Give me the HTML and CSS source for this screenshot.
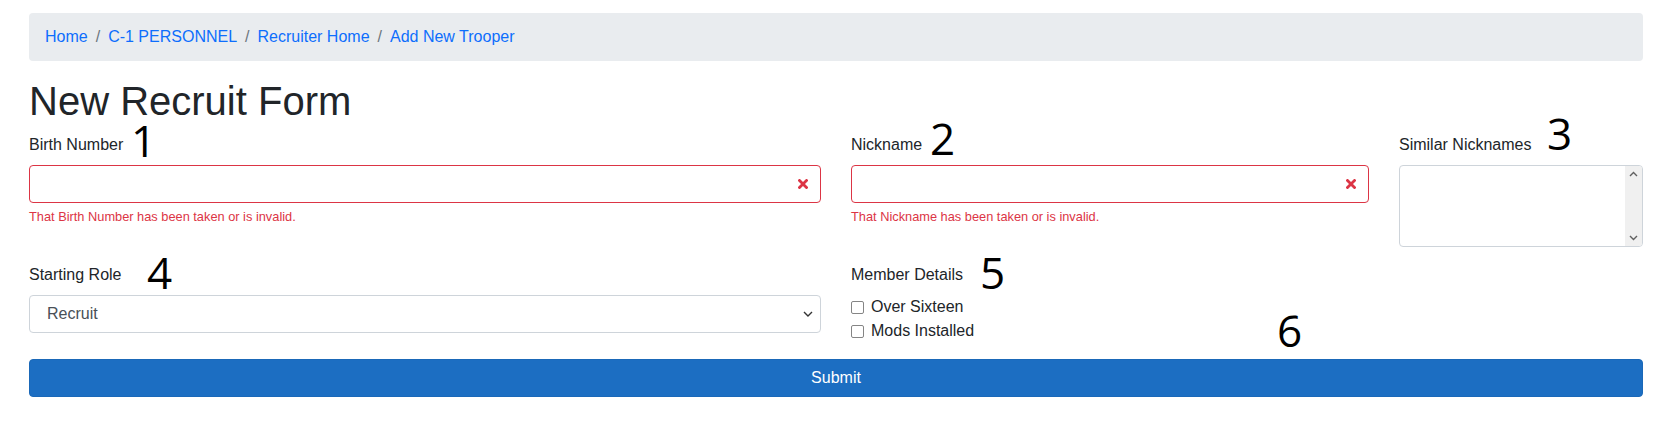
FILE: index.html
```html
<!DOCTYPE html>
<html lang="en">
<head>
<meta charset="utf-8">
<title>New Recruit Form</title>
<link rel="stylesheet" href="styles.css">
</head>
<body>
<div class="page">
  <nav class="breadcrumb">
    <a href="#">Home</a><span class="sep">/</span>
    <a href="#">C-1 PERSONNEL</a><span class="sep">/</span>
    <a href="#">Recruiter Home</a><span class="sep">/</span>
    <a href="#">Add New Trooper</a>
  </nav>
  <h1 class="title">New Recruit Form</h1>
  <form class="form">
    <div class="row">
      <div class="col col-6">
        <label class="label">Birth Number</label>
        <div class="field">
          <input class="control invalid" type="text">
          <svg class="x-icon" viewBox="0 0 10 10" width="10" height="10"><path d="M1.5 1.5 L8.5 8.5 M8.5 1.5 L1.5 8.5" stroke="#dc3545" stroke-width="2.8" stroke-linecap="square"/></svg>
        </div>
        <div class="feedback">That Birth Number has been taken or is invalid.</div>
      </div>
      <div class="col col-4">
        <label class="label">Nickname</label>
        <div class="field">
          <input class="control invalid" type="text">
          <svg class="x-icon" viewBox="0 0 10 10" width="10" height="10"><path d="M1.5 1.5 L8.5 8.5 M8.5 1.5 L1.5 8.5" stroke="#dc3545" stroke-width="2.8" stroke-linecap="square"/></svg>
        </div>
        <div class="feedback">That Nickname has been taken or is invalid.</div>
      </div>
      <div class="col col-2">
        <label class="label">Similar Nicknames</label>
        <div class="listbox">
          <div class="list-area"></div>
          <div class="scrollbar">
            <svg viewBox="0 0 17 17" width="17" height="17"><path d="M5 10 L8.5 6.5 L12 10" fill="none" stroke="#606060" stroke-width="1.4"/></svg>
            <svg viewBox="0 0 17 17" width="17" height="17"><path d="M5 7 L8.5 10.5 L12 7" fill="none" stroke="#606060" stroke-width="1.4"/></svg>
          </div>
        </div>
      </div>
    </div>
    <div class="row">
      <div class="col col-6">
        <label class="label">Starting Role</label>
        <div class="field">
          <select class="control select">
            <option>Recruit</option>
          </select>
          <svg class="chev" viewBox="0 0 10 6" width="10" height="6"><path d="M1 1 L5 5 L9 1" fill="none" stroke="#333" stroke-width="1.4"/></svg>
        </div>
      </div>
      <div class="col col-6">
        <label class="label">Member Details</label>
        <label class="check"><input type="checkbox"><span>Over Sixteen</span></label>
        <label class="check"><input type="checkbox"><span>Mods Installed</span></label>
      </div>
    </div>
    <button class="submit" type="button">Submit</button>
  </form>

  <span class="annot a1">1</span>
  <span class="annot a2">2</span>
  <span class="annot a3">3</span>
  <span class="annot a4">4</span>
  <span class="annot a5">5</span>
  <span class="annot a6">6</span>
</div>
</body>
</html>
```
FILE: styles.css
```css
* { box-sizing: border-box; }
html, body { margin: 0; padding: 0; background: #fff; }
body {
  font-family: "Liberation Sans", Arial, sans-serif;
  font-size: 16px;
  line-height: 1.5;
  color: #212529;
}
.page {
  position: relative;
  padding: 13px 11px 0 29px;
}
.breadcrumb {
  display: flex;
  align-items: center;
  height: 48px;
  padding: 0 16px;
  background: #e9ecef;
  border-radius: 4px;
  margin-bottom: 16px;
}
.breadcrumb a { color: #0d6efd; text-decoration: none; }
.breadcrumb .sep { color: #6c757d; padding: 0 8px; }
.title {
  font-size: 40px;
  font-weight: 400;
  line-height: 1.2;
  margin: 0 0 8px;
}
.form { margin: 0; }
.row {
  display: flex;
  margin: 0 -15px;
}
.col { padding: 0 15px; margin-bottom: 16px; }
.col-6 { flex: 0 0 50%; }
.col-4 { flex: 0 0 33.3333%; }
.col-2 { flex: 0 0 16.6667%; }
.label {
  display: block;
  margin-bottom: 8px;
}
.field { position: relative; }
.control {
  display: block;
  width: 100%;
  height: 38px;
  padding: 6px 12px;
  font: inherit;
  color: #495057;
  background: #fff;
  border: 1px solid #ced4da;
  border-radius: 4px;
  outline: none;
}
.control.invalid { border-color: #dc3545; }
.x-icon {
  position: absolute;
  right: 13px;
  top: 14px;
}
.feedback {
  margin-top: 4px;
  font-size: 12.8px;
  line-height: 1.5;
  color: #dc3545;
}
.listbox {
  display: flex;
  height: 82px;
  border: 1px solid #ced4da;
  border-radius: 4px;
  overflow: hidden;
}
.list-area { flex: 1; }
.scrollbar {
  width: 17px;
  background: #f0f0f0;
  display: flex;
  flex-direction: column;
  justify-content: space-between;
}
.scrollbar svg { display: block; }
.select {
  appearance: none;
  -webkit-appearance: none;
  padding-left: 17px;
}
.chev {
  position: absolute;
  right: 8px;
  top: 16px;
}
.check {
  display: flex;
  align-items: center;
  height: 24px;
}
.check input {
  appearance: none;
  -webkit-appearance: none;
  width: 13px;
  height: 13px;
  margin: 0 7px 0 0;
  border: 1.5px solid #858585;
  border-radius: 2px;
  background: #fff;
}
.submit {
  display: block;
  width: 100%;
  height: 38px;
  margin: 0;
  font: inherit;
  color: #fff;
  background: #1c6ec2;
  border: 1px solid #1a68b8;
  border-radius: 4px;
}
.annot {
  position: absolute;
  font-family: "Open Sans", sans-serif;
  font-size: 44px;
  line-height: 30px;
  color: #000;
}
.a1 { left: 131px; top: 125px; }
.a2 { left: 930px; top: 123px; }
.a3 { left: 1547px; top: 118px; }
.a4 { left: 147px; top: 257px; }
.a5 { left: 980px; top: 257px; }
.a6 { left: 1277px; top: 315px; }
```
